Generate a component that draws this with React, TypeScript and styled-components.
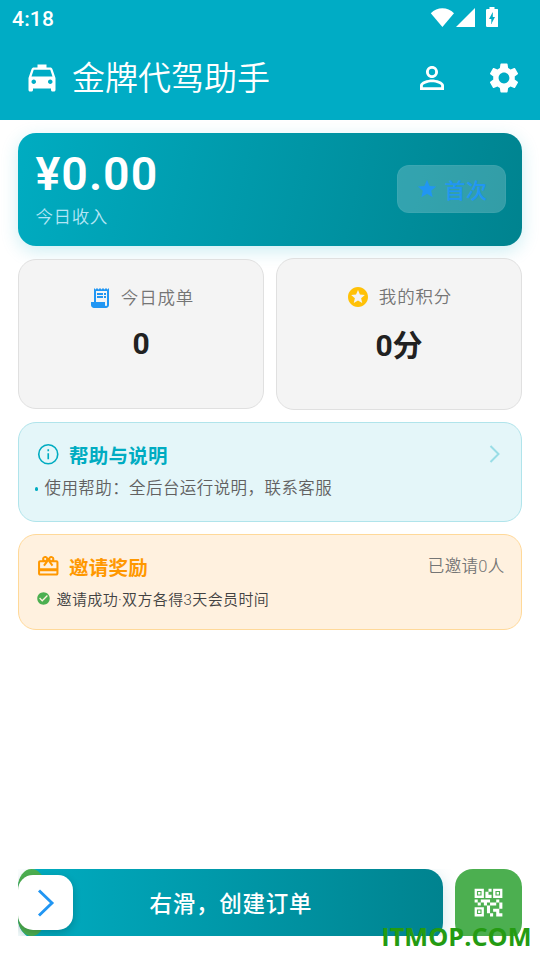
import React from "react";
import styled, { createGlobalStyle } from "styled-components";
import {
  MdLocalTaxi,
  MdPersonOutline,
  MdSettings,
  MdStar,
  MdReceiptLong,
  MdStars,
  MdCardGiftcard,
  MdCheckCircle,
  MdQrCode2,
} from "react-icons/md";

const GlobalStyle = createGlobalStyle`
  * { box-sizing: border-box; }
  body {
    margin: 0;
    background: #fff;
    font-family: Roboto, "Noto Sans CJK SC", sans-serif;
  }
  svg { display: block; flex: none; }
`;

const Screen = styled.div`
  width: 540px;
  height: 960px;
  display: flex;
  flex-direction: column;
  background: #fff;
  overflow: hidden;
`;

const TopArea = styled.header`
  height: 120px;
  background: #00acc5;
  color: #fff;
  flex: none;
`;

const StatusBar = styled.div`
  height: 36px;
  padding: 0 42px 0 12px;
  display: flex;
  justify-content: space-between;
`;

const Clock = styled.span`
  font-size: 21px;
  line-height: 38px;
  font-weight: 500;
  letter-spacing: 0.2px;
`;

const StatusIcons = styled.div`
  display: flex;
  padding-top: 7px;
`;

const AppBar = styled.div`
  height: 84px;
  display: flex;
  align-items: center;
  padding: 0 18px 0 24px;
`;

const AppTitle = styled.h1`
  margin: 0 0 0 12px;
  flex: 1;
  font-size: 33px;
  line-height: 48px;
  font-weight: 350;
  padding-top: 1px;
`;

const BarButtons = styled.div`
  display: flex;
  gap: 36px;
`;

const Content = styled.main`
  flex: 1;
  padding: 12.5px 18px 0;
  display: flex;
  flex-direction: column;
`;

const IncomeCard = styled.section`
  height: 113px;
  flex: none;
  border-radius: 18px;
  padding: 14px 16.5px 0 17.5px;
  display: flex;
  justify-content: space-between;
  background: linear-gradient(102.6deg, #00acc1, #00838f);
  box-shadow: 0 5px 18px rgba(0, 172, 193, 0.2);
`;

const Amount = styled.div`
  font-size: 46.5px;
  line-height: 54px;
  font-weight: 600;
  letter-spacing: 1px;
  color: #fff;
`;

const IncomeLabel = styled.div`
  margin-top: 3px;
  font-size: 17.5px;
  line-height: 26px;
  font-weight: 350;
  letter-spacing: 0.6px;
  color: #b3e5f5;
`;

const FirstBadge = styled.button`
  margin-top: 18px;
  width: 109px;
  height: 48px;
  border: 1px solid rgba(255, 255, 255, 0.04);
  border-radius: 12px;
  padding: 5px 0 0 1px;
  display: flex;
  align-items: center;
  justify-content: center;
  gap: 7px;
  background: rgba(255, 255, 255, 0.2);
  color: #2196f3;
  font: 500 21px/30px Roboto, "Noto Sans CJK SC", sans-serif;
  letter-spacing: 0.4px;

  svg {
    margin-top: -4px;
  }
`;

const StatRow = styled.div`
  margin-top: 12.5px;
  display: flex;
  align-items: center;
  gap: 12px;
`;

const StatCard = styled.section<{ $tall?: boolean }>`
  flex: 1;
  height: ${(p) => (p.$tall ? 152 : 150)}px;
  border: 1.5px solid #e0e0e0;
  border-radius: 18px;
  background: #f4f4f4;
  padding-top: 25px;
  text-align: center;
`;

const StatLabel = styled.div`
  display: flex;
  align-items: center;
  justify-content: center;
  gap: 9px;
  font-size: 17.5px;
  line-height: 26px;
  font-weight: 350;
  letter-spacing: 0.85px;
  color: #757575;
`;

const StatValue = styled.div<{ $tall?: boolean }>`
  margin-top: ${(p) => (p.$tall ? 16 : 13)}px;
  font-size: 30px;
  line-height: 40px;
  font-weight: 700;
  color: #212121;
`;

const InfoCard = styled.section<{ $tone: "help" | "invite" }>`
  margin-top: 12px;
  height: ${(p) => (p.$tone === "help" ? 100 : 96)}px;
  border: 1.5px solid ${(p) => (p.$tone === "help" ? "#b0e4eb" : "#ffd999")};
  border-radius: 18px;
  background: ${(p) => (p.$tone === "help" ? "#e4f6f9" : "#fff1df")};
  color: ${(p) => (p.$tone === "help" ? "#00acc1" : "#ff9800")};
  padding: ${(p) => (p.$tone === "help" ? 15.5 : 15.5)}px 16.5px 0 16.5px;
`;

const InfoHead = styled.div`
  display: flex;
  align-items: center;
  height: 31px;
`;

const InfoTitle = styled.h2`
  margin: 0 0 0 9px;
  padding-top: 5px;
  flex: 1;
  font-size: 19.5px;
  line-height: 30px;
  font-weight: 700;
  letter-spacing: 0.25px;
`;

const InvitedCount = styled.span`
  font-size: 16.5px;
  line-height: 32px;
  height: 31px;
  font-weight: 350;
  letter-spacing: 0.3px;
  color: #757575;
`;

const HelpText = styled.p`
  margin: 6.5px 0 0 -1px;
  display: flex;
  align-items: center;
  gap: 6.5px;
  font-size: 16.5px;
  line-height: 26px;
  font-weight: 350;
  letter-spacing: 0.42px;
  color: #616161;
`;

const Dot = styled.i`
  width: 3.5px;
  height: 3.5px;
  margin-top: 0;
  border-radius: 50%;
  background: #00acc1;
`;

const InviteText = styled.p`
  margin: 6px 0 0;
  display: flex;
  align-items: center;
  gap: 6px;
  font-size: 15px;
  line-height: 24px;
  font-weight: 350;
  letter-spacing: 0.38px;
  color: #424242;

  svg {
    margin-top: -2px;
  }
`;

const Footer = styled.footer`
  position: relative;
  height: 91px;
  flex: none;
  padding: 0 18px;
`;

const Actions = styled.div`
  height: 67px;
  display: flex;
  gap: 12px;
  align-items: flex-start;
  overflow: hidden;
`;

const SlideTrack = styled.div`
  width: 425px;
  height: 72px;
  border-radius: 18px 18px 18px 24px / 18px 18px 18px 22px;
  display: flex;
  align-items: flex-start;
  background: linear-gradient(to right, #00acc1, #00838f);
  box-shadow: 0 5px 18px rgba(0, 131, 143, 0.2);
`;

const SlideProgress = styled.div`
  width: 27px;
  height: 67px;
  flex: none;
  border-radius: 13.5px / 18px;
  background: #4caf50;
`;

const SlideThumb = styled.div`
  width: 55px;
  height: 55px;
  margin: 6px 0 0 -27px;
  flex: none;
  border-radius: 15px;
  display: flex;
  align-items: center;
  justify-content: center;
  background: #fff;
  box-shadow: 0 3px 9px rgba(0, 0, 0, 0.2);
`;

const SlideLabel = styled.span`
  flex: 1;
  padding-right: 54px;
  text-align: center;
  white-space: nowrap;
  font-size: 22.5px;
  line-height: 71px;
  font-weight: 500;
  letter-spacing: 0.75px;
  color: #fff;
`;

const QrButton = styled.button`
  width: 67px;
  height: 72px;
  border: 0;
  border-radius: 18px;
  padding: 0 0 6px;
  display: flex;
  align-items: center;
  justify-content: center;
  background: #4caf50;
  color: #fff;
`;

const Watermark = styled.span`
  position: absolute;
  right: 8.5px;
  top: 49px;
  font: 700 25.3px/36px "Open Sans", "Noto Sans", sans-serif;
  color: #249b12;
`;

export default function App() {
  return (
    <>
      <GlobalStyle />
      <Screen>
        <TopArea>
          <StatusBar>
            <Clock>4:18</Clock>
            <StatusIcons>
              <svg width="68" height="21" viewBox="0 0 68 21" fill="#fff">
                <path d="M.8 6.2C7.2-.5 17.6-.5 24 6.2L12.4 20Z" />
                <path d="M45 1v19H26Z" />
                <path
                  fillRule="evenodd"
                  d="M59.5 0h5v2H67a1.3 1.3 0 0 1 1.3 1.3V18.7A1.3 1.3 0 0 1 67 20H57.3a1.3 1.3 0 0 1-1.3-1.3V3.3A1.3 1.3 0 0 1 57.3 2h2.2ZM62.8 5 59 12h2.3v5L65 10h-2.2Z"
                />
              </svg>
            </StatusIcons>
          </StatusBar>
          <AppBar>
            <MdLocalTaxi size={36} />
            <AppTitle>金牌代驾助手</AppTitle>
            <BarButtons>
              <MdPersonOutline size={36} />
              <MdSettings size={36} />
            </BarButtons>
          </AppBar>
        </TopArea>
        <Content>
          <IncomeCard>
            <div>
              <Amount>¥0.00</Amount>
              <IncomeLabel>今日收入</IncomeLabel>
            </div>
            <FirstBadge>
              <MdStar size={22} />
              首次
            </FirstBadge>
          </IncomeCard>
          <StatRow>
            <StatCard>
              <StatLabel>
                <MdReceiptLong size={24} color="#2196f3" />
                今日成单
              </StatLabel>
              <StatValue>0</StatValue>
            </StatCard>
            <StatCard $tall>
              <StatLabel>
                <MdStars size={24} color="#ffc107" />
                我的积分
              </StatLabel>
              <StatValue $tall>0分</StatValue>
            </StatCard>
          </StatRow>
          <InfoCard $tone="help">
            <InfoHead>
              <svg width="24.5" height="24.5" viewBox="0 0 24 24" fill="none" stroke="currentColor" strokeWidth="1.6">
                <circle cx="12" cy="12" r="9.3" />
                <path d="M12 11v6M12 7v2" />
              </svg>
              <InfoTitle>帮助与说明</InfoTitle>
              <svg width="20" height="20" viewBox="0 0 20 20" fill="none" stroke="#99dde6" strokeWidth="2">
                <path d="m5.5 2 8 8-8 8" />
              </svg>
            </InfoHead>
            <HelpText>
              <Dot />
              使用帮助：全后台运行说明，联系客服
            </HelpText>
          </InfoCard>
          <InfoCard $tone="invite">
            <InfoHead>
              <MdCardGiftcard size={24.5} />
              <InfoTitle>邀请奖励</InfoTitle>
              <InvitedCount>已邀请0人</InvitedCount>
            </InfoHead>
            <InviteText>
              <MdCheckCircle size={15} color="#4caf50" />
              邀请成功·双方各得3天会员时间
            </InviteText>
          </InfoCard>
        </Content>
        <Footer>
          <Actions>
            <SlideTrack>
              <SlideProgress />
              <SlideThumb>
                <svg width="28" height="28" viewBox="0 0 28 28" fill="none" stroke="#2196f3" strokeWidth="2.9">
                  <path d="m7 1.5 13 12.5-13 12.5" />
                </svg>
              </SlideThumb>
              <SlideLabel>右滑，创建订单</SlideLabel>
            </SlideTrack>
            <QrButton>
              <MdQrCode2 size={37} />
            </QrButton>
          </Actions>
          <Watermark>ITMOP.COM</Watermark>
        </Footer>
      </Screen>
    </>
  );
}
